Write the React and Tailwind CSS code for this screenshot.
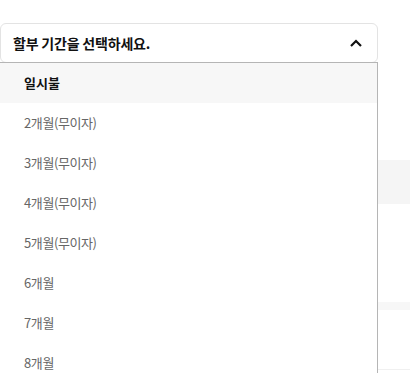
import React from "react";

const items = [
  "일시불",
  "2개월(무이자)",
  "3개월(무이자)",
  "4개월(무이자)",
  "5개월(무이자)",
  "6개월",
  "7개월",
  "8개월",
];

export default function App() {
  return (
    <div
      className="w-[410px] h-[373px] overflow-hidden bg-white flex"
      style={{ fontFamily: '"Noto Sans CJK KR", "Noto Sans", sans-serif' }}
    >
      <div className="w-[378px] shrink-0 pt-[23px] flex flex-col">
        <div className="h-[40px] shrink-0 border border-[#e3e3e3] rounded-[6px] flex items-center justify-between pl-[12px] pr-[15px]">
          <span className="text-[14px] font-semibold text-[#111] tracking-[-0.2px]">
            할부 기간을 선택하세요.
          </span>
          <svg width="12" height="8" viewBox="0 0 12 8" fill="none">
            <path d="M1 7 L6 2 L11 7" stroke="#111" strokeWidth="2.2" />
          </svg>
        </div>
        <div className="shrink-0 -mt-[1px] border-t border-r border-[#b5b5b5] flex flex-col">
          {items.map((t, i) => (
            <div
              key={t}
              className={
                i === 0
                  ? "h-[40px] shrink-0 flex items-center pl-[24px] bg-[#f7f7f7] text-[13px] font-bold text-[#111]"
                  : "h-[40px] shrink-0 flex items-center pl-[24px] bg-white text-[13px] text-[#666] tracking-[-0.4px]"
              }
            >
              {t}
            </div>
          ))}
        </div>
      </div>
      <div className="flex-1 flex flex-col">
        <div className="h-[160px] shrink-0" />
        <div className="h-[44px] shrink-0 bg-[#f5f5f5]" />
        <div className="h-[98px] shrink-0" />
        <div className="h-[8px] shrink-0 bg-[#f7f7f7]" />
        <div className="h-[60px] shrink-0 border-b border-[#f0f0f0]" />
      </div>
    </div>
  );
}
